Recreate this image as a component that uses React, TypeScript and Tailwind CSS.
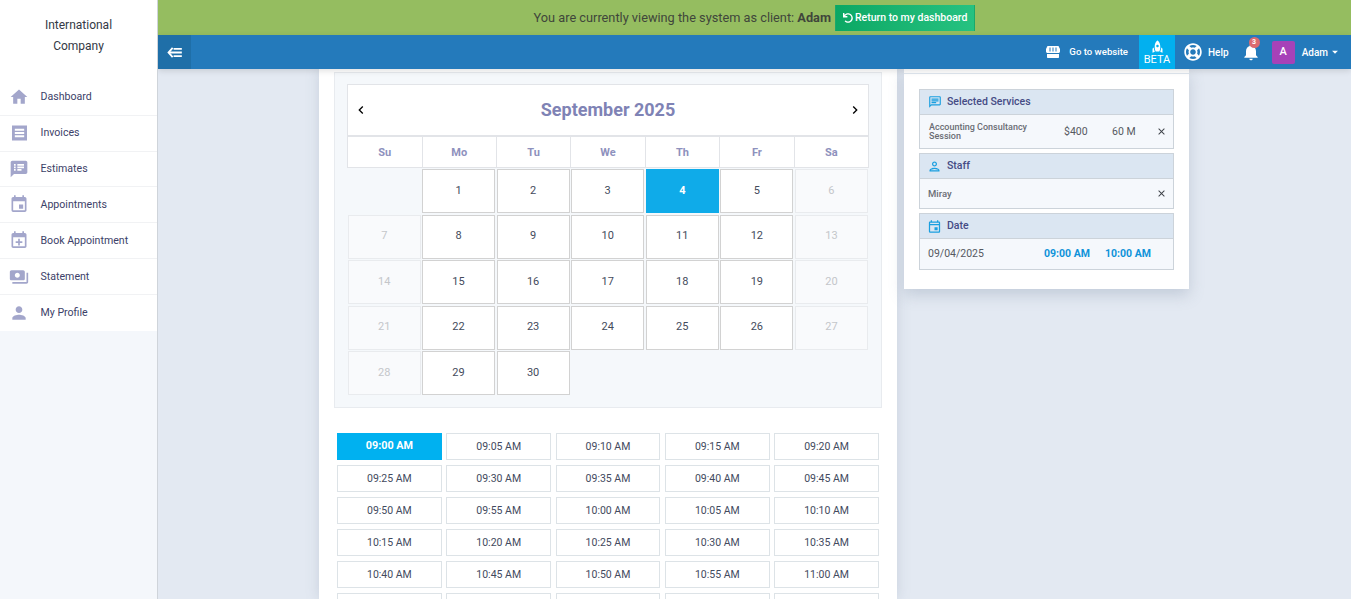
import {
  MdHome,
  MdSpeakerNotes,
  MdEvent,
  MdPayments,
  MdPerson,
  MdRocket,
  MdNotifications,
  MdArrowDropDown,
  MdOutlineChat,
  MdOutlinePerson,
  MdOutlineEvent,
  MdClose,
  MdChevronLeft,
  MdChevronRight,
} from 'react-icons/md';
import { FaRegLifeRing, FaUndo } from 'react-icons/fa';
import type { ReactNode } from 'react';

function ReceiptIcon() {
  return (
    <svg viewBox="0 0 16 16" className="w-[15px] h-[16px]" fill="currentColor">
      <path d="M0 0h16v16H0z M3 3.5v2h10v-2z M3 7v2h10V7z M3 10.5v2h10v-2z" fillRule="evenodd" />
    </svg>
  );
}

function CalendarPlusIcon() {
  return (
    <svg viewBox="0 0 24 24" className="w-[21px] h-[21px]" fill="currentColor">
      <path
        fillRule="evenodd"
        d="M19 3h-1V1h-2v2H8V1H6v2H5C3.9 3 3 3.9 3 5v14c0 1.1.9 2 2 2h14c1.1 0 2-.9 2-2V5c0-1.1-.9-2-2-2zm0 16H5V8h14v11zM11 10h2v3h3v2h-3v3h-2v-3H8v-2h3z"
      />
    </svg>
  );
}

function CollapseIcon() {
  return (
    <svg viewBox="0 0 16 12" className="w-[15px] h-[11px]" fill="none" stroke="white" strokeWidth="2">
      <path d="M6 1L1.5 6L6 11" />
      <path d="M2 6H16M7 2H16M7 10H16" />
    </svg>
  );
}

// striped awning over a solid base
function StoreIcon() {
  return (
    <svg viewBox="0 0 14 12" className="w-[14px] h-[12px]" fill="white">
      <path
        fillRule="evenodd"
        d="M1.5 0h11L14 3v2.5c0 .8-.7 1.5-1.5 1.5h-11C.7 7 0 6.300 0 5.500V3zM3.500 1.500v4h1v-4zM6.500 1.500v4h1v-4zM9.500 1.500v4h1v-4z"
      />
      <path d="M1 8h12v3c0 .6-.4 1-1 1H2c-.6 0-1-.4-1-1z" />
    </svg>
  );
}

const navItems: { label: string; icon: ReactNode }[] = [
  { label: 'Dashboard', icon: <MdHome size={20} /> },
  { label: 'Invoices', icon: <ReceiptIcon /> },
  { label: 'Estimates', icon: <MdSpeakerNotes size={20} /> },
  { label: 'Appointments', icon: <MdEvent size={21} /> },
  { label: 'Book Appointment', icon: <CalendarPlusIcon /> },
  { label: 'Statement', icon: <MdPayments size={20} /> },
  { label: 'My Profile', icon: <MdPerson size={22} /> },
];

const weekdays = ['Su', 'Mo', 'Tu', 'We', 'Th', 'Fr', 'Sa'];

const days: (number | null)[] = [null, ...Array.from({ length: 30 }, (_, i) => i + 1)];

const times = [
  '09:00 AM', '09:05 AM', '09:10 AM', '09:15 AM', '09:20 AM',
  '09:25 AM', '09:30 AM', '09:35 AM', '09:40 AM', '09:45 AM',
  '09:50 AM', '09:55 AM', '10:00 AM', '10:05 AM', '10:10 AM',
  '10:15 AM', '10:20 AM', '10:25 AM', '10:30 AM', '10:35 AM',
  '10:40 AM', '10:45 AM', '10:50 AM', '10:55 AM', '11:00 AM',
  '11:05 AM', '11:10 AM', '11:15 AM', '11:20 AM', '11:25 AM',
];

function DayCell({ day, index }: { day: number | null; index: number }) {
  if (day === null) return <div />;
  const weekend = index % 7 === 0 || index % 7 === 6;
  if (weekend) {
    return (
      <div className="flex items-center justify-center border border-[#e9ebee] bg-[#f9fafc] text-[#c4c6ca] text-[11px]">
        {day}
      </div>
    );
  }
  if (day === 4) {
    return <div className="flex items-center justify-center bg-[#0fabe9] text-white font-bold text-[11px]">{day}</div>;
  }
  return (
    <div className="flex items-center justify-center border border-[#d2d2d2] bg-white text-[#444b5c] text-[11px]">
      {day}
    </div>
  );
}

function SummaryHeader({ icon, title }: { icon: ReactNode; title: string }) {
  return (
    <div className="h-[25px] flex items-center bg-[#dbe6f2] border-b border-[#ccd3da] pl-[7px] gap-[5px]">
      <span className="w-[15px] flex justify-center text-[#1a9fe0]">{icon}</span>
      <span className="text-[10.5px] font-medium text-[#454b85]">{title}</span>
    </div>
  );
}

export default function App() {
  return (
    <div className="h-[599px] w-[1351px] overflow-hidden flex bg-[#e3e9f2] font-['Roboto',sans-serif]">
      <aside className="w-[158px] shrink-0 h-full bg-[#f4f7fb] border-r border-[#cfd4da] z-20">
        <div className="bg-white h-[331px] pt-[15px]">
          <div className="text-center text-[12px] leading-[21px] text-[#333845]">
            International
            <br />
            Company
          </div>
          <nav className="mt-[23px]">
            {navItems.map((item) => (
              <div key={item.label} className="h-[35.83px] flex items-center border-b border-[#f1f2f4] last:border-b-0">
                <span className="w-[40.5px] pl-[9px] flex items-center text-[#a3a6cb]">
                  <span className="w-[20px] flex justify-center">{item.icon}</span>
                </span>
                <span className="text-[10.6px] text-[#3c4168]">{item.label}</span>
              </div>
            ))}
          </nav>
        </div>
      </aside>

      <div className="flex-1 min-w-0 flex flex-col">
        <div className="h-[35px] shrink-0 bg-[#95bd60] flex items-center justify-center gap-[4px] text-[12.75px] text-[#40463b]">
          <span>
            You are currently viewing the system as client: <b>Adam</b>
          </span>
          <button className="h-[26px] px-[7px] flex items-center gap-[2px] bg-gradient-to-r from-[#0aa864] to-[#26c281] text-white text-[10.5px] font-medium border-x border-[#1aa86c]">
            <FaUndo size={10} />
            Return to my dashboard
          </button>
        </div>

        <header className="h-[34px] shrink-0 bg-[#247abb] flex items-center shadow-[0_2px_6px_rgba(0,0,0,0.12)] z-10">
          <div className="w-[33px] h-full bg-[#1f6fa8] flex items-center justify-center">
            <CollapseIcon />
          </div>
          <div className="ml-auto flex items-center h-full text-white">
            <StoreIcon />
            <span className="ml-[9px] text-[9.6px] font-medium">Go to website</span>
            <div className="ml-[11px] w-[36px] h-full bg-[#02b0ef] flex flex-col items-center justify-center pt-[1px]">
              <MdRocket size={15} />
              <span className="text-[11px] leading-[12px]">BETA</span>
            </div>
            <FaRegLifeRing size={18} className="ml-[9px]" />
            <span className="ml-[6px] text-[10px] font-medium">Help</span>
            <div className="relative ml-[12px]">
              <MdNotifications size={20} />
              <span className="absolute -top-[5px] left-[8px] w-[11px] h-[11px] rounded-full bg-[#dc6b6f] text-[7px] font-bold flex items-center justify-center">
                3
              </span>
            </div>
            <div className="ml-[11px] w-[23px] h-[23px] rounded-[2px] bg-[#a642b8] flex items-center justify-center text-[11px] font-medium">
              A
            </div>
            <span className="ml-[7px] text-[10px] font-medium">Adam</span>
            <MdArrowDropDown size={14} className="mr-[9px]" />
          </div>
        </header>

        <main className="flex-1 min-h-0 overflow-hidden flex items-start">
          <section className="ml-[161px] w-[578px] h-full bg-white shadow-[0_0_12px_rgba(120,135,160,0.25)] pl-[15px] pt-[3px]">
            <div className="w-[548px] h-[336px] border border-[#e8ebef] bg-[#f5f8fb] pt-[11px] px-[12px]">
              <div className="border border-[#e2e4e8] bg-white h-[52px] flex items-center justify-between px-[5px] pb-[2px]">
                <MdChevronLeft size={16} className="text-black mt-[2px]" />
                <span className="text-[18px] font-bold text-[#7f83b5]">September 2025</span>
                <MdChevronRight size={16} className="text-black mt-[2px]" />
              </div>
              <div className="grid grid-cols-[73.5px_repeat(6,minmax(0,1fr))] h-[32px] bg-white border border-[#e2e4e8]">
                {weekdays.map((d) => (
                  <div
                    key={d}
                    className="flex items-center justify-center pt-[2px] border-l border-[#e2e4e8] first:border-l-0 text-[11px] font-bold text-[#8e91bd]"
                  >
                    {d}
                  </div>
                ))}
              </div>
              <div className="grid grid-cols-[72.5px_repeat(6,minmax(0,1fr))] auto-rows-[44px] gap-[1.5px] mt-[1px] px-[1px]">
                {days.map((day, i) => (
                  <DayCell key={i} day={day} index={i} />
                ))}
              </div>
            </div>

            <div className="w-[542px] ml-[3px] mt-[25px] grid grid-cols-5 gap-x-[4.5px] gap-y-[5px] auto-rows-[27px]">
              {times.map((t) =>
                t === '09:00 AM' ? (
                  <div key={t} className="flex items-center justify-center bg-[#00b1f0] text-white font-bold text-[10.8px]">
                    {t}
                  </div>
                ) : (
                  <div
                    key={t}
                    className="flex items-center justify-center border border-[#dde3e7] bg-white text-[#434a5e] text-[10.5px]"
                  >
                    {t}
                  </div>
                ),
              )}
            </div>
          </section>

          <section className="ml-[7px] w-[285px] h-[220px] bg-white shadow-[0_6px_14px_rgba(120,135,160,0.3)] pt-[4px]">
            <div className="border-t border-[#dfe6ee] pt-[15px] px-[15px]">
              <div className="border border-[#ccd3da] bg-[#f5f8fc]">
                <SummaryHeader icon={<MdOutlineChat size={14} />} title="Selected Services" />
                <div className="h-[33px] flex items-center pl-[9px] pr-[6px] text-[#6a6d74]">
                  <span className="w-[124px] pt-[1px] text-[9px] leading-[9px] font-medium">
                    Accounting Consultancy Session
                  </span>
                  <span className="ml-[11px] w-[37px] text-[10.5px] text-[#555962]">$400</span>
                  <span className="ml-[11px] w-[40px] text-[10.5px] text-[#555962]">60 M</span>
                  <MdClose size={11} className="ml-auto text-[#3c4047]" />
                </div>
              </div>
              <div className="mt-[4px] border border-[#ccd3da] bg-[#f5f8fc]">
                <SummaryHeader icon={<MdOutlinePerson size={15} />} title="Staff" />
                <div className="h-[29px] flex items-center pl-[8px] pr-[6px] text-[#6a6d74]">
                  <span className="pt-[1px] text-[9.5px] font-medium">Miray</span>
                  <MdClose size={11} className="ml-auto text-[#3c4047]" />
                </div>
              </div>
              <div className="mt-[4px] border border-[#ccd3da] bg-[#f5f8fc]">
                <SummaryHeader icon={<MdOutlineEvent size={15} />} title="Date" />
                <div className="h-[30px] flex items-center pl-[8px] text-[10.5px] text-[#555962]">
                  <span className="w-[116px]">09/04/2025</span>
                  <span className="w-[61px] font-bold text-[#0f93d9]">09:00 AM</span>
                  <span className="font-bold text-[#0f93d9]">10:00 AM</span>
                </div>
              </div>
            </div>
          </section>
        </main>
      </div>
    </div>
  );
}
